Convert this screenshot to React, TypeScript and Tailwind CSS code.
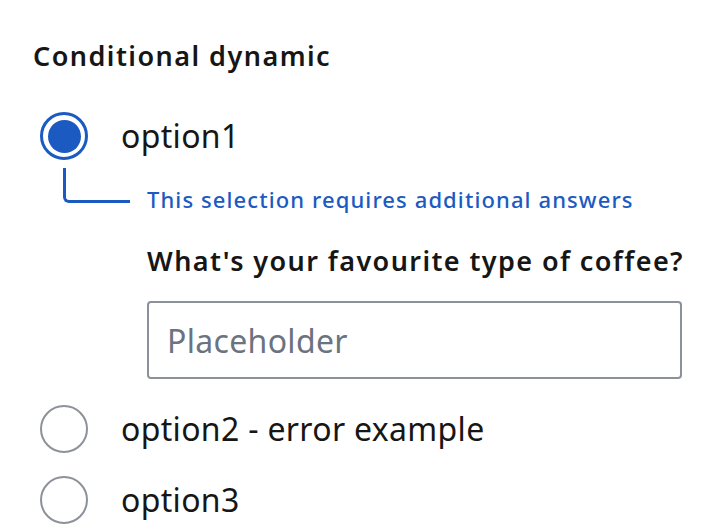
export default function App() {
  const options = [
    { id: "option1", label: "option1", checked: true },
    { id: "option2", label: "option2 - error example", checked: false },
    { id: "option3", label: "option3", checked: false },
  ]

  return (
    <div className="w-[718px] h-[532px] overflow-hidden bg-white pl-[33px] pt-[36px] font-['Noto_Sans',sans-serif] text-[#161616]">
      <h2 className="text-[27px] leading-[40px] font-semibold tracking-[0.054em]">Conditional dynamic</h2>

      <div className="flex flex-col mt-[36px]">
        {/* option1 with conditional follow-up */}
        <label className="flex items-center h-12 pl-[7px]">
          <span className="w-12 h-12 rounded-full border-[3px] border-[#1b5bc1] flex items-center justify-center">
            <span className="w-[33px] h-[33px] rounded-full bg-[#1b5bc1]" />
          </span>
          <span className="ml-[33px] text-[32px] leading-[40px] tracking-[0.01em]">{options[0].label}</span>
        </label>

        <div className="flex items-end mt-[8px] pl-[30px]">
          <div className="w-[67px] h-[35px] border-l-[3px] border-b-[3px] border-[#1b5bc1] rounded-bl-[6px]" />
          <span className="ml-[17px] mb-[-11px] text-[22px] leading-[30px] font-medium text-[#1b5bc1] tracking-[0.05em]">
            This selection requires additional answers
          </span>
        </div>

        <div className="pl-[114px] mt-[40px]">
          <div className="text-[27px] leading-[36px] font-semibold tracking-[0.052em]">
            What's your favourite type of coffee?
          </div>
          <input
            className="mt-[22px] w-[535px] h-[78px] border-2 border-[#8c9099] rounded-[4px] px-[18px] text-[32px] tracking-[0.01em] outline-none placeholder:text-[#6b7380]"
            placeholder="Placeholder"
          />
        </div>

        {options.slice(1).map((o, i) => (
          <label key={o.id} className={`flex items-center h-12 pl-[7px] ${i === 0 ? "mt-[26px]" : "mt-[23px]"}`}>
            <span className="w-12 h-12 rounded-full border-2 border-[#8d9199]" />
            <span className="ml-[33px] text-[32px] leading-[40px] tracking-[0.01em]">{o.label}</span>
          </label>
        ))}
      </div>
    </div>
  )
}
